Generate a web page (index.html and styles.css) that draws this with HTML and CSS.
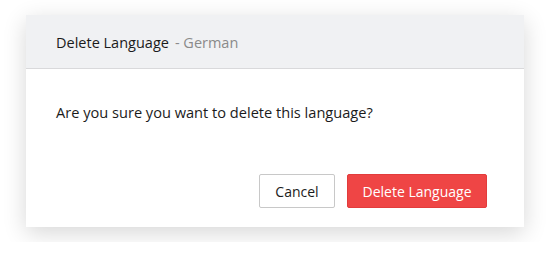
FILE: index.html
```html
<!DOCTYPE html>
<html>
<head>
<meta charset="utf-8">
<link rel="stylesheet" href="styles.css">
</head>
<body>
<div class="dialog">
  <div class="dialog-header">
    <span class="title">Delete Language</span>
    <span class="subtitle">- German</span>
  </div>
  <div class="dialog-body">
    <p class="message">Are you sure you want to delete this language?</p>
  </div>
  <div class="dialog-footer">
    <button class="btn btn-cancel">Cancel</button>
    <button class="btn btn-danger">Delete Language</button>
  </div>
</div>
</body>
</html>
```
FILE: styles.css
```css
* { box-sizing: border-box; }
html, body { margin: 0; background: #ffffff; }
body {
  padding: 15px 26px;
  font-family: "Open Sans", "Lato", sans-serif;
  color: #1b1b1b;
}
.dialog {
  width: 498px;
  height: 212px;
  background: #fff;
  box-shadow: 0 6px 22px rgba(0,0,0,0.16);
  display: flex;
  flex-direction: column;
}
.dialog-header {
  height: 54px;
  background: #f0f1f3;
  border-bottom: 1px solid #d9d9db;
  display: flex;
  align-items: center;
  padding: 1px 30px 0 30px;
  font-size: 14.5px;
}
.title { color: #1b1b1b; }
.subtitle { color: #8a8a8a; margin-left: 6px; }
.dialog-body {
  padding: 33px 30px 0 30px;
  flex: 1;
}
.message {
  margin: 0;
  font-size: 14.6px;
  line-height: 20px;
}
.dialog-footer {
  display: flex;
  justify-content: flex-end;
  gap: 12px;
  padding: 0 37px 19px 0;
}
.btn {
  height: 34px;
  font-family: inherit;
  font-size: 14px;
  border-radius: 2px;
  cursor: pointer;
}
.btn-cancel {
  width: 76px;
  background: #fff;
  border: 1px solid #c8c8c8;
  color: #1b1b1b;
}
.btn-danger {
  width: 140px;
  background: #ef4545;
  border: 1px solid #e23c3c;
  color: #fff;
}
```
